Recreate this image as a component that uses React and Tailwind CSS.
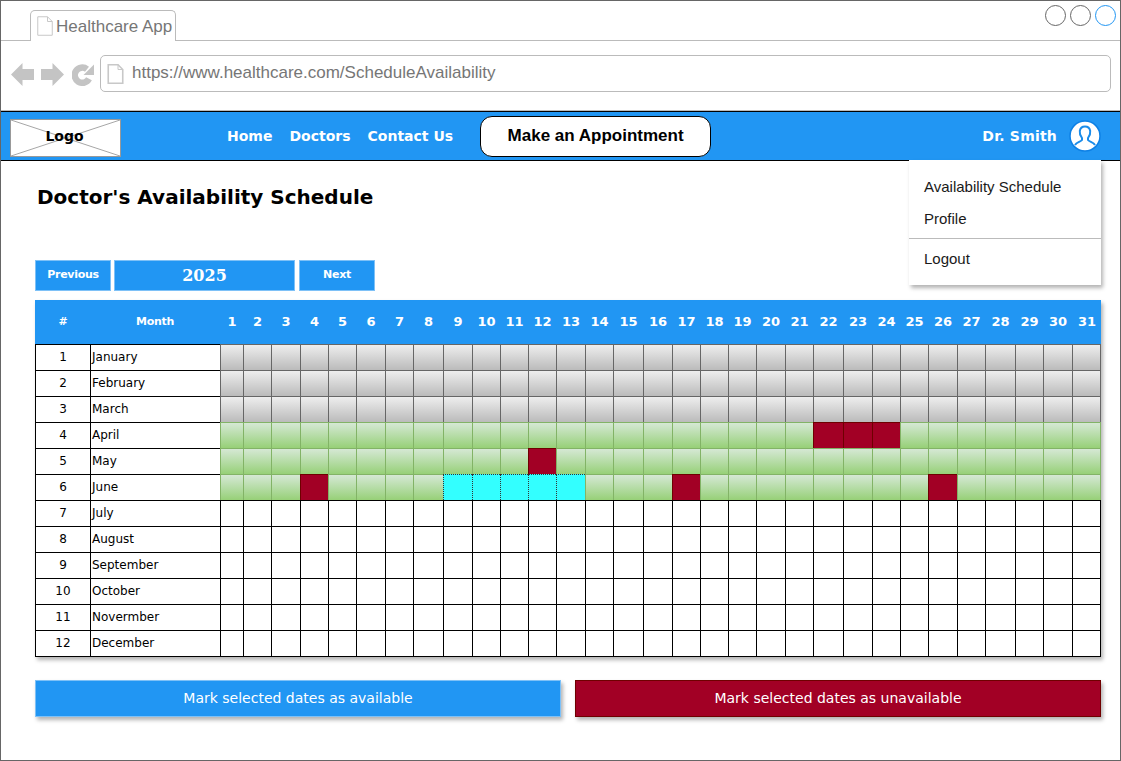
import React from "react";

const months = ["January","February","March","April","May","June","July","August","September","October","Novermber","December"];
const days = Array.from({ length: 31 }, (_, i) => i + 1);

const cellClass = {
  grey: "border-l border-t border-[#666666] bg-linear-to-b from-[#eeeeee] to-[#bbbbbb]",
  green: "border-l border-t border-[#82b366] bg-linear-to-b from-[#d5e8d4] to-[#97d077]",
  red: "border-l border-t border-[#6f0000] bg-[#a20025]",
  cyan: "border-l border-t border-dotted border-[#333333] bg-[#33ffff]",
  white: "border-l border-t border-black bg-white",
};

function status(m, d) {
  if (m < 3) return "grey";
  if (m === 3) return d >= 22 && d <= 24 ? "red" : "green";
  if (m === 4) return d === 12 ? "red" : "green";
  if (m === 5) {
    if (d === 4 || d === 17 || d === 26) return "red";
    if (d >= 9 && d <= 13) return "cyan";
    return "green";
  }
  return "white";
}

const gridCols =
  "grid-cols-[55px_130px_23px_28px_29px_28px_28px_29px_28px_30px_29px_28px_28px_28px_29px_28px_30px_29px_28px_28px_28px_29px_28px_30px_29px_28px_28px_29px_28px_30px_28px_29px_29px]";

function PageIcon({ className, strokeWidth = 1 }) {
  return (
    <svg className={className} viewBox="0 0 16 20" fill="none" stroke="#c8c8c8" strokeWidth={strokeWidth}>
      <path d="M0.75 0.75H10.5L15.25 5.5V19.25H0.75Z" fill="#fff" />
      <path d="M10.5 0.75V5.5H15.25" strokeWidth="1" />
    </svg>
  );
}

function LogoBox() {
  return (
    <div className="relative mt-[7px] ml-[9px] flex h-[38px] w-[111px] items-center justify-center border border-[#999999] bg-white pr-[2px] pb-[4px]">
      <svg className="absolute inset-0 h-full w-full" viewBox="0 0 109 36" preserveAspectRatio="none">
        <path d="M0 0L109 36M109 0L0 36" stroke="#a6a6a6" strokeWidth="1" fill="none" />
      </svg>
      <span className="relative text-[14px] leading-none font-bold text-black">Logo</span>
    </div>
  );
}

export default function App() {
  return (
    <div className="relative box-border h-[761px] w-[1121px] overflow-hidden border border-[#666666] bg-white font-['DejaVu_Sans',sans-serif]">
      {/* browser chrome */}
      <div className="flex h-[40px] justify-between border-b border-[#bbbbbb] font-['Liberation_Sans',sans-serif]">
        <div className="relative mt-[9px] ml-[29px] flex h-[31px] w-[146px] items-center rounded-t-[5px] border border-b-0 border-[#bbbbbb] bg-white pl-[6px]">
          <PageIcon className="h-[20px] w-[16px]" />
          <span className="ml-[3px] text-[17px] leading-none text-[#767676]">Healthcare App</span>
        </div>
        <div className="mt-[4px] mr-[4px] flex gap-[4px]">
          <div className="h-[21px] w-[21px] rounded-full border border-[#666666]" />
          <div className="h-[21px] w-[21px] rounded-full border border-[#666666]" />
          <div className="h-[21px] w-[21px] rounded-full border border-[#2196f3]" />
        </div>
      </div>
      <div className="flex h-[70px] items-start border-b border-[#bbbbbb] pr-[9px] pl-[10px] font-['Liberation_Sans',sans-serif]">
        <svg className="mt-[22px] h-[23px] w-[23px]" viewBox="0 0 23 23">
          <path d="M0 11.5L11.5 0V6H23V17H11.5V23Z" fill="#c4c4c4" />
        </svg>
        <svg className="mt-[22px] ml-[7px] h-[23px] w-[23px]" viewBox="0 0 23 23">
          <path d="M23 11.5L11.5 0V6H0V17H11.5V23Z" fill="#c4c4c4" />
        </svg>
        <svg className="mt-[22px] ml-[8px] h-[23px] w-[22px]" viewBox="0 0 22 23">
          <path d="M17 15.8A7.6 7.6 0 1 1 15 6.2" fill="none" stroke="#c4c4c4" strokeWidth="6.5" />
          <path d="M22 1.5V12H11.5Z" fill="#c4c4c4" />
        </svg>
        <div className="mt-[14px] ml-[6px] flex h-[37px] flex-1 items-center rounded-[5px] border border-[#bbbbbb] bg-white pl-[6px]">
          <PageIcon className="h-[20px] w-[17px]" strokeWidth={1.6} />
          <span className="ml-[8px] pb-[2px] text-[17px] leading-none text-[#767676]">https://www.healthcare.com/ScheduleAvailability</span>
        </div>
      </div>

      {/* app bar */}
      <div className="flex h-[50px] border-y border-black bg-[#2196f3]">
        <LogoBox />
        <nav className="ml-[106px] flex h-full items-center gap-[17px] text-[14px] font-bold text-white">
          <span>Home</span>
          <span>Doctors</span>
          <span>Contact Us</span>
        </nav>
        <div className="mt-[4px] ml-[27px] flex h-[41px] w-[231px] items-center justify-center rounded-[12px] border border-black bg-white pb-[2px] font-['Liberation_Sans',sans-serif] text-[17px] font-bold text-black">
          Make an Appointment
        </div>
        <div className="ml-auto flex h-full items-center pr-[19px]">
          <span className="text-[14px] font-bold tracking-[0.2px] text-white">Dr. Smith</span>
          <svg className="ml-[12px] h-[32px] w-[32px]" viewBox="0 0 32 32">
            <circle cx="16" cy="16" r="15" fill="#fff" stroke="#0d80e5" strokeWidth="1.5" />
            <path
              d="M6 25C7.5 22 11.5 22 13 20V18C11 15.5 10.5 13 10.8 11C11.3 8 13.5 6.5 16 6.5C18.5 6.5 20.7 8 21.2 11C21.5 13 21 15.5 19 18V20C20.5 22 24.5 22 26 25"
              fill="none"
              stroke="#1a8cea"
              strokeWidth="2"
            />
          </svg>
        </div>
      </div>

      {/* main */}
      <main className="pr-[19px] pl-[34px]">
        <h1 className="mt-[22px] ml-[2px] h-[28px] text-[20px] leading-[28px] font-bold text-black">Doctor's Availability Schedule</h1>
        <div className="mt-[49px] flex h-[31px] text-white">
          <div className="flex w-[76px] items-center justify-center border border-[#7ec1f7] bg-[#2196f3] text-[11px] font-bold tracking-[-0.3px]">Previous</div>
          <div className="ml-[3px] flex w-[181px] items-center justify-center border border-[#7ec1f7] bg-[#2196f3] font-['DejaVu_Serif',serif] text-[16px] font-bold">2025</div>
          <div className="ml-[4px] flex w-[76px] items-center justify-center border border-[#7ec1f7] bg-[#2196f3] text-[11px] font-bold tracking-[-0.3px]">Next</div>
        </div>

        <div className="mt-[9px] shadow-[2px_3px_4px_rgba(0,0,0,0.3)]">
          <div className={`grid ${gridCols} h-[44px] items-center bg-[#2196f3] text-center text-[11px] font-bold tracking-[-0.3px] text-white`}>
            <span className="pl-px">#</span>
            <span>Month</span>
            {days.map((d) => (
              <span key={d} className="pl-px text-[13px] tracking-normal">{d}</span>
            ))}
          </div>
          <div className={`grid ${gridCols} auto-rows-[26px] border-b border-black text-[12px] text-black`}>
            {months.map((month, m) => (
              <React.Fragment key={month}>
                <div className="flex items-center justify-center border-t border-l border-black bg-white pb-[2px]">{m + 1}</div>
                <div className="flex items-center border-t border-l border-black bg-white pb-[2px] pl-px">{month}</div>
                {days.map((d) => (
                  <div key={d} className={`${cellClass[status(m, d)]} ${d === 31 ? "border-r" : ""}`} />
                ))}
              </React.Fragment>
            ))}
          </div>
        </div>

        <div className="mt-[23px] grid grid-cols-2 gap-[14px] text-[14px] text-white">
          <div className="flex h-[37px] items-center justify-center border border-[#7ec1f7] bg-[#2196f3] shadow-[2px_3px_4px_rgba(0,0,0,0.3)]">Mark selected dates as available</div>
          <div className="flex h-[37px] items-center justify-center border border-[#6f0000] bg-[#a20025] shadow-[2px_3px_4px_rgba(0,0,0,0.3)]">Mark selected dates as unavailable</div>
        </div>
      </main>

      {/* user dropdown */}
      <div className="absolute top-[159px] left-[908px] h-[125px] w-[192px] bg-white pt-[11px] font-['Liberation_Sans',sans-serif] text-[15px] text-[#1a1a1a] shadow-[2px_3px_4px_rgba(0,0,0,0.3)]">
        <div className="flex h-[32px] items-center px-[15px]">Availability Schedule</div>
        <div className="flex h-[32px] items-center px-[15px]">Profile</div>
        <div className="mt-[3px] border-t border-[#bbbbbb]" />
        <div className="mt-[4px] flex h-[32px] items-center px-[15px]">Logout</div>
      </div>
    </div>
  );
}
